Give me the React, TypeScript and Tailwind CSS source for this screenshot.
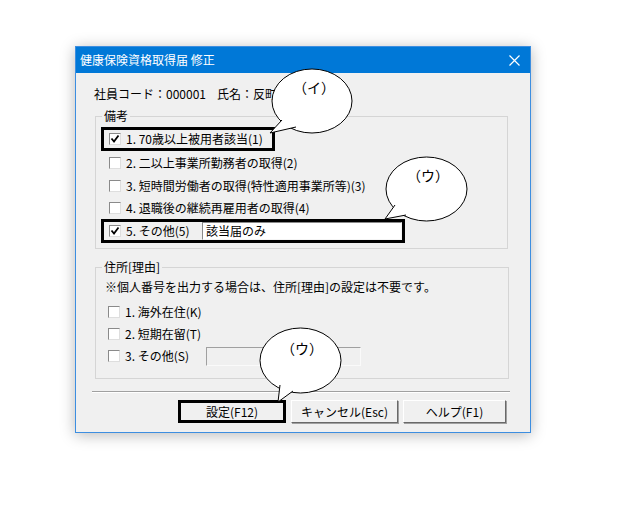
import React from "react";

const font = { fontFamily: '"Noto Sans CJK JP", "Noto Sans", sans-serif' };

function CheckBox({ checked }: { checked?: boolean }) {
  return (
    <span className="w-[12px] h-[12px] shrink-0 bg-white border border-t-[#8a8a8a] border-l-[#8a8a8a] border-r-[#dedede] border-b-[#dedede] flex items-center justify-center">
      {checked && (
        <svg width="10" height="10" viewBox="0 0 10 10">
          <polyline points="1.5,4.5 4,7.5 8.5,1.5" fill="none" stroke="#000" strokeWidth="1.8" />
        </svg>
      )}
    </span>
  );
}

const bikou = [
  { label: "1. 70歳以上被用者該当(1)", checked: true, mark: true, h: "h-[24px]", w: "w-[174px]" },
  { label: "2. 二以上事業所勤務者の取得(2)", h: "h-[23px]", w: "w-[300px]" },
  { label: "3. 短時間労働者の取得(特性適用事業所等)(3)", h: "h-[23px]", w: "w-[300px]" },
  { label: "4. 退職後の継続再雇用者の取得(4)", h: "h-[22px]", w: "w-[300px]" },
];

function Callout({
  cx,
  cy,
  rx,
  ry,
  tail,
  label,
  tx,
  ty,
}: {
  cx: number;
  cy: number;
  rx: number;
  ry: number;
  tail: string;
  label: string;
  tx: number;
  ty: number;
}) {
  return (
    <>
      <ellipse cx={cx} cy={cy} rx={rx} ry={ry} fill="#fff" stroke="#000" strokeWidth="1" />
      <path d={tail} fill="#fff" stroke="#000" strokeWidth="1" />
      <text x={tx} y={ty} fontSize="14" textAnchor="middle" fill="#000" style={font}>
        {label}
      </text>
    </>
  );
}

export default function App() {
  return (
    <div className="relative w-[618px] h-[507px] bg-white overflow-hidden text-[12px] text-black" style={font}>
      <div className="ml-[75px] mt-[46px] w-[456px] h-[387px] border border-[#3d8ee0] bg-[#f0f0f0] shadow-[0_2px_14px_rgba(0,0,0,0.28)] flex flex-col">
        {/* title bar */}
        <div className="h-[26px] bg-[#0078d7] flex items-center justify-between pl-[4px] pr-[10px] text-white">
          <span className="text-[12px] leading-[14px]">健康保険資格取得届 修正</span>
          <svg width="11" height="11" viewBox="0 0 11 11">
            <path d="M0.5 0.5 L10.5 10.5 M10.5 0.5 L0.5 10.5" stroke="#fff" strokeWidth="1.2" />
          </svg>
        </div>

        {/* employee line */}
        <div className="mt-[14px] pl-[18px] h-[14px] leading-[14px] flex">
          <span className="w-[123px]">社員コード：000001</span>
          <span>氏名：反町</span>
        </div>

        {/* 備考 */}
        <div className="mt-[15px] ml-[19px] w-[413px] h-[133px] border border-[#d5d5d5] flex flex-col">
          <span className="-mt-[8px] ml-[6px] px-[2px] w-fit bg-[#f0f0f0] leading-[14px]">備考</span>
          <div className="mt-[4px] flex flex-col">
            {bikou.map((r, i) => (
              <div
                key={i}
                className={`ml-[5px] ${r.h} ${r.w} border-[3px] ${r.mark ? "border-black" : "border-transparent"} pl-[5px] flex items-center gap-[5px] whitespace-nowrap`}
              >
                <CheckBox checked={r.checked} />
                <span className="leading-[14px]">{r.label}</span>
              </div>
            ))}
            <div className="ml-[5px] h-[24px] w-[304px] border-[3px] border-black pl-[5px] flex items-center gap-[5px] whitespace-nowrap">
              <CheckBox checked />
              <span className="leading-[14px]">5. その他(5)</span>
              <div className="ml-auto w-[200px] h-[18px] bg-white border border-t-[#8a8a8a] border-l-[#8a8a8a] border-r-[#f4f4f4] border-b-[#f4f4f4] flex items-center pl-[3px] leading-[14px]">
                該当届のみ
              </div>
            </div>
          </div>
        </div>

        {/* 住所[理由] */}
        <div className="mt-[18px] ml-[19px] w-[414px] h-[112px] border border-[#d5d5d5] flex flex-col">
          <span className="-mt-[8px] ml-[6px] px-[2px] w-fit bg-[#f0f0f0] leading-[14px]">住所[理由]</span>
          <div className="mt-[6px] pl-[9px] leading-[14px] h-[14px]">
            ※個人番号を出力する場合は、住所[理由]の設定は不要です。
          </div>
          <div className="mt-[7px] flex flex-col pl-[12px]">
            <div className="h-[22px] flex items-center gap-[5px]">
              <CheckBox />
              <span className="leading-[14px]">1. 海外在住(K)</span>
            </div>
            <div className="h-[22px] flex items-center gap-[5px]">
              <CheckBox />
              <span className="leading-[14px]">2. 短期在留(T)</span>
            </div>
            <div className="h-[22px] flex items-center gap-[5px]">
              <CheckBox />
              <span className="leading-[14px] w-[76px]">3. その他(S)</span>
              <div className="w-[155px] h-[19px] bg-[#f0f0f0] border border-t-[#a0a0a0] border-l-[#a0a0a0] border-r-[#fafafa] border-b-[#fafafa]" />
            </div>
          </div>
        </div>

        {/* separator */}
        <div className="mt-[12px] ml-[16px] w-[418px] h-[2px] border-t border-t-[#a0a0a0] border-b border-b-white" />

        {/* buttons */}
        <div className="mt-[7px] ml-[102px] flex gap-[5px]">
          <button className="w-[108px] h-[23px] border-[3px] border-black bg-[#f0f0f0] leading-[14px]">設定(F12)</button>
          <button className="w-[107px] h-[23px] border border-t-white border-l-white border-r-[#696969] border-b-[#696969] bg-[#f0f0f0] shadow-[1px_1px_0_#a0a0a0] leading-[14px]">
            キャンセル(Esc)
          </button>
          <button className="w-[103px] h-[23px] border border-t-white border-l-white border-r-[#696969] border-b-[#696969] bg-[#f0f0f0] shadow-[1px_1px_0_#a0a0a0] leading-[14px]">
            ヘルプ(F1)
          </button>
        </div>
      </div>

      {/* annotation callouts */}
      <svg className="absolute left-0 top-0 pointer-events-none" width="618" height="507">
        <Callout cx={312} cy={101} rx={40} ry={32} tail="M282 120 L270 133 L296 127" label="（イ）" tx={314} ty={93} />
        <Callout cx={426.5} cy={189} rx={40.5} ry={32} tail="M395 205 L385 219 L406 215" label="（ウ）" tx={428} ty={181} />
        <Callout cx={300.5} cy={360.5} rx={40.5} ry={32.5} tail="M280 385 L278 402 L293 391" label="（ウ）" tx={302} ty={354} />
      </svg>
    </div>
  );
}
